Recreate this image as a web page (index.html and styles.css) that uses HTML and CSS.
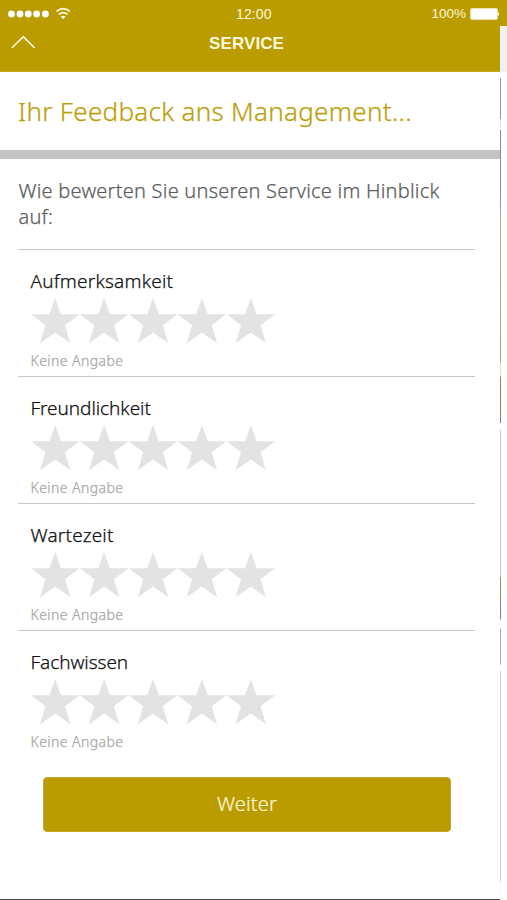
FILE: index.html
```html
<!DOCTYPE html>
<html lang="de">
<head>
<meta charset="utf-8">
<title>Service</title>
<link rel="stylesheet" href="styles.css">
</head>
<body>
<svg class="defs" aria-hidden="true">
  <symbol id="stars" viewBox="0 0 245 46">
    <path id="star" d="M24.2 0 30 16.3H48.6L34 27.2 39.4 45.2 24.2 34.6 9 45.2 14.4 27.2 0 16.3H18.4Z"/>
    <use href="#star" x="48.9"/><use href="#star" x="97.8"/><use href="#star" x="146.7"/><use href="#star" x="195.6"/>
  </symbol>
</svg>
<div class="status">
  <svg class="signal" width="64" height="14" viewBox="0 0 64 14">
    <g fill="#fff"><circle cx="3.5" cy="7" r="3.4"/><circle cx="12" cy="7" r="3.4"/><circle cx="20.3" cy="7" r="3.4"/><circle cx="28.6" cy="7" r="3.4"/><circle cx="37.4" cy="7" r="3.4"/><path d="M52.8 9.5Q55.2 8.1 57.6 9.5L55.2 11.9Z"/></g>
    <path d="M48.4 4.4Q55.2-1.2 62 4.4M50.8 7.4Q55.2 3.8 59.6 7.4" fill="none" stroke="#fff8dc" stroke-width="1.7"/>
  </svg>
  <span class="clock">12:00</span>
  <span class="percent">100%</span>
  <svg class="battery" width="30" height="12" viewBox="0 0 30 12"><rect x=".5" y=".5" width="27" height="11" rx="1.5" fill="#fff" stroke="#eee0a8"/><path d="M28 4q2.4 2 0 4Z" fill="#fff"/></svg>
</div>
<div class="screen">
  <main class="panel">
    <header class="nav">
      <svg width="24" height="14" viewBox="0 0 24 14"><path d="M.8 13 12.3 1.6 23.6 13" fill="none" stroke="#fff8dc" stroke-width="1.6"/></svg>
      <strong>SERVICE</strong>
    </header>
    <h1>Ihr Feedback ans Management...</h1>
    <div class="body">
      <p class="intro">Wie bewerten Sie unseren Service im Hinblick<br>auf:</p>
      <section><h2>Aufmerksamkeit</h2><svg class="stars"><use href="#stars"/></svg><p>Keine Angabe</p></section>
      <section><h2 class="tight">Freundlichkeit</h2><svg class="stars"><use href="#stars"/></svg><p>Keine Angabe</p></section>
      <section><h2>Wartezeit</h2><svg class="stars"><use href="#stars"/></svg><p>Keine Angabe</p></section>
      <section><h2 class="tight">Fachwissen</h2><svg class="stars"><use href="#stars"/></svg><p>Keine Angabe</p></section>
    </div>
    <button type="button">Weiter</button>
  </main>
  <aside class="edge"><div class="tab"></div><div class="line"></div></aside>
</div>
</body>
</html>
```
FILE: styles.css
```css
* { box-sizing: border-box; }
body { margin: 0; width: 507px; height: 900px; overflow: hidden; background: #fff; font-family: "Noto Sans", "Open Sans", sans-serif; font-weight: 300; }
h1, h2, p { margin: 0; font-weight: inherit; -webkit-text-stroke: .25px currentColor; }
.defs { display: none; }
.status { height: 26px; background: #ba9b00; color: #fff8dc; display: grid; grid-template-columns: 228px 176px 58px 30px; align-items: center; padding: 1px 7px 0 8px; font: 14px/24px "Liberation Sans", sans-serif; }
.signal { display: block; }
.clock { letter-spacing: .1px; }
.percent { font-size: 13.5px; text-align: right; padding-right: 4px; }
.battery { display: block; }
.screen { display: flex; height: 874px; }
.panel { width: 500px; border-bottom: 1px solid #48484a; }
.nav { height: 46px; background: #ba9b00; display: grid; grid-template-columns: 188px 1fr; padding: 9px 0 0 11px; border-bottom: 1px solid #c3a71b; }
.nav strong { font: bold 17px/17px "Liberation Sans", sans-serif; letter-spacing: .1px; color: #fff8dc; padding-left: 10px; }
h1 { height: 87px; padding: 21px 0 0 18px; border-bottom: 9px solid #c4c4c6; color: #bd9e09; font-size: 26px; line-height: 36px; letter-spacing: .3px; white-space: nowrap; }
.body { padding: 19px 25px 0 18px; }
.intro { height: 71px; padding-left: .5px; font-size: 20px; line-height: 26px; letter-spacing: .23px; color: #5c5c5e; white-space: nowrap; }
section { height: 127px; border-top: 1px solid #c8c8c8; padding: 19px 0 0 12.5px; }
h2 { font-size: 19px; line-height: 24px; letter-spacing: .2px; color: #111; }
.tight { letter-spacing: -.06px; }
.stars { display: block; width: 245px; height: 46px; margin: 5px 0 0 .5px; fill: #e3e3e3; }
section p { margin-top: 7px; font-size: 14px; line-height: 20px; letter-spacing: .42px; color: #a6a6a6; }
button { display: block; width: 408px; height: 55px; margin: 20px 0 0 43px; padding: 0 0 2px; border: 1px solid #c3a82c; border-radius: 4px; background: #ba9b00; color: #fff8dc; font: 300 20px/52px "Noto Sans", sans-serif; letter-spacing: .15px; -webkit-text-stroke: .2px currentColor; }
.edge { width: 7px; }
.tab { height: 46px; background: #f0f0f0; }
.line { width: 1px; height: 828px; background: linear-gradient(#fff 0 6px, #a98f8d 6px 47px, #eee2d5 47px 58px, #a38484 58px 120px, #c7a98d 150px, #b29a84 290px, #f3dfc5 291px 304px, #a07965 305px 351px, #fff 351px 358px, #c9c9c9 358px 505px, #8a9569 506px 524px, #dc7765 525px 529px, #8a7d83 530px 547px, #fff 548px 556px, #aaa 557px 592px, #fff 593px 599px, #cecece 599px 809px, #fffbe0 809px); }
```
